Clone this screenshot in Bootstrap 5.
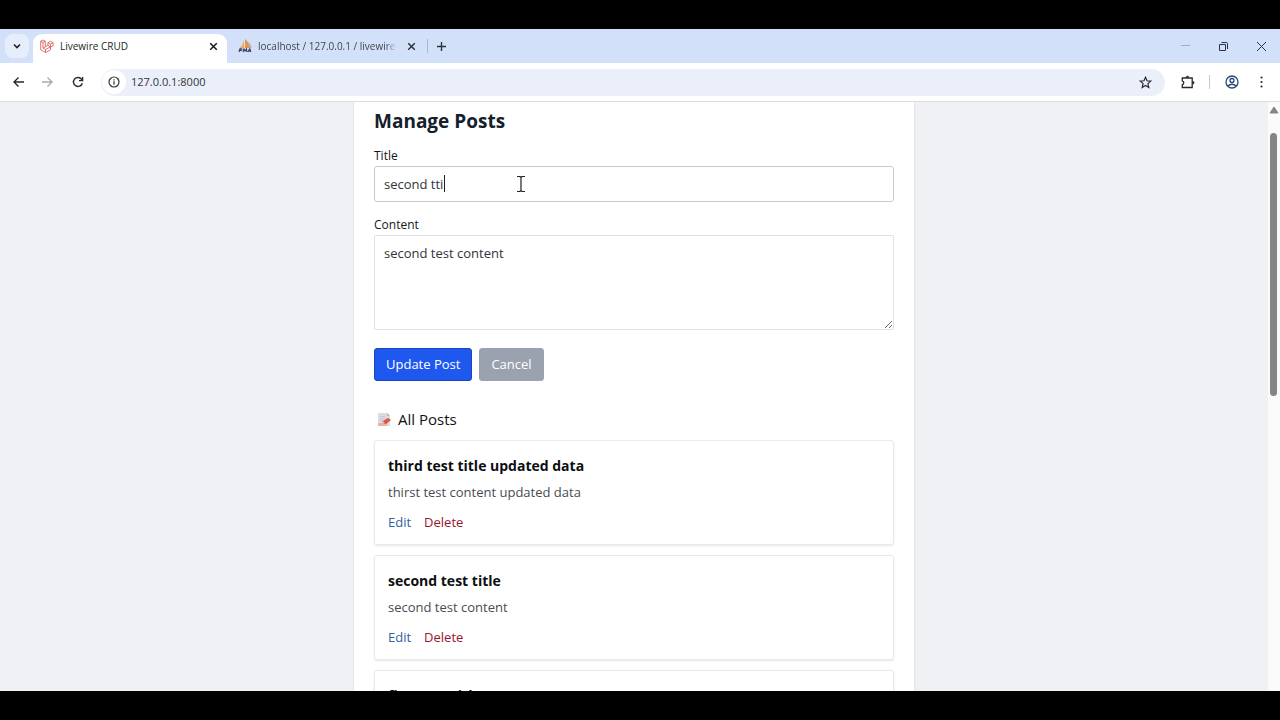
<!DOCTYPE html>
<html lang="en">
<head>
<meta charset="utf-8">
<meta name="viewport" content="width=device-width, initial-scale=1">
<title>Livewire CRUD</title>
<link href="https://cdn.jsdelivr.net/npm/bootstrap@5.3.0/dist/css/bootstrap.min.css" rel="stylesheet">
<style>
body{font-family:"Open Sans","Noto Sans",sans-serif;font-size:13px;line-height:20px;color:#1b1f24;background:#000;padding:29px 0}
svg{display:block;flex:none}
.plain{border:0;background:none;padding:0;color:#22252a}
.tabstrip{background:#d3e0f9;height:34px;font-size:10px;padding:5px 12px 0 5px}
.tab-search{width:24px;height:24px;border-radius:8px;background:#e6eefc}
.strip-group{height:24px}
.window-controls{gap:25px}
.tab-active{width:194px;height:29px;margin-left:4px;padding:0 9px 5px 7px;background:#fff;border-radius:9px 9px 0 0}
.tab-idle{width:200px;height:29px;padding:0 11px 5px 11px;color:#41464e}
.tab-name{overflow:hidden;white-space:nowrap;flex:1 1 0;min-width:0;margin-left:6px}
.tab-fade{margin-right:10px;-webkit-mask-image:linear-gradient(90deg,#000 92%,transparent);mask-image:linear-gradient(90deg,#000 92%,transparent)}
.tab-sep{width:1px;height:14px;background:#a9b7d0}
.toolbar{background:#fff;height:39px;border-bottom:1px solid #dcdddf;padding:0 12px}
.omnibox{height:27px;border-radius:14px;background:#ebeff9;margin-left:13px;padding:0 13px 0 1px}
.omnibox input{font-size:11px;color:#30343a;outline:0;margin-left:5px}
.info-dot{width:24px;height:24px;border-radius:12px;background:#fff}
.tool-sep{margin:0 15px 0 14px;opacity:.75}
.viewport-area{background:#f0f1f4;overflow:hidden}
.panel{width:560px;background:#fff;padding:7px 20px 0;box-shadow:0 0 2px #cfd2d8}
.panel h1{font-size:19px;line-height:24px;font-weight:700;margin:0 0 15px;color:#14202b}
.form-label{font-size:12px;line-height:16px;margin:0 0 2px;font-weight:500;color:#14171a}
.panel .form-control{font-size:13px;line-height:20px;padding:7px 9px;border:1px solid #dfe2e5;border-radius:3px;color:#30343a}
.panel input.form-control{height:36px;border-color:#c3ced2}
.panel textarea.form-control{height:95px;border-radius:2px;resize:both}
.field{margin-bottom:15px}
.actions{margin-top:18px;gap:7px}
.actions .btn{font-size:13px;line-height:19px;padding:6px 11px;border-radius:3px;color:#fff}
.btn-update{background:#1f58ef;border-color:#1746b8}
.btn-cancel{background:#9aa1af;border-color:#9aa1af}
.panel h2{font-size:15px;line-height:24px;font-weight:500;color:#111;margin:26px 0 9px;padding-left:3px;gap:6px}
.post{border:1px solid #e8eaec;border-radius:3px;box-shadow:0 1px 2px #e3e5e8;padding:14px 13px 11px;margin-bottom:10px;height:105px}
.post h3{font-size:14px;line-height:22px;font-weight:700;margin:0 0 5px;color:#0c0f12}
.post p{margin:0 0 10px;color:#474c53}
.post-links{gap:13px}
.edit-link{color:#2f5f9e}.delete-link{color:#98152c}
.caret{position:absolute;left:70px;top:9px;width:1px;height:17px;background:#222}
.pointer{position:absolute;left:142px;top:9px}
.scroller{width:12px;background:#fbfbfc;padding:4px 1px 0 0}
.thumb{width:7px;border-radius:4px;background:#858585;height:45%;margin-top:19px}
</style>
</head>
<body class="vh-100 d-flex flex-column overflow-hidden">
<header>
<div class="tabstrip d-flex align-items-start">
  <button class="plain tab-search d-flex align-items-center justify-content-center" aria-label="Search tabs"><svg width="10" height="10" viewBox="0 0 10 10" fill="none" stroke="#1d2127" stroke-width="1.6"><path d="M2 3.5l3 3 3-3"/></svg></button>
  <div class="tab-active d-flex align-items-center">
    <svg width="14" height="14" viewBox="0 0 14 14" fill="none" stroke="#d9625e" stroke-width=".9" stroke-linejoin="round"><path d="M.7 2.2L3 1l2.3 1.2v5.6l2.6-1.5V3.7l2.6-1.4 2.6 1.4v3L10.500 8.200v2.600L5.500 13.500.7 10.800zM.7 2.200L3 3.500l2.300-1.300M3 3.500v5.700l2.500 1.400 5-2.800M3 9.200l2.300-1.400M7.900 3.700l2.600 1.500 2.600-1.500M10.500 5.200v3M7.900 6.300l2.600 1.700M5.500 10.600v2.900"/></svg>
    <span class="tab-name">Livewire CRUD</span>
    <button class="plain" aria-label="Close tab"><svg width="9" height="9" viewBox="0 0 9 9" stroke="#17191c" stroke-width="1.500"><path d="M1.200 1.200l6.600 6.600M7.800 1.200L1.200 7.800"/></svg></button>
  </div>
  <div class="tab-idle d-flex align-items-center">
    <svg width="14" height="14" viewBox="0 0 14 14"><path d="M6 1v8H1.500Q5 6 6 1z" fill="#e8ab6d"/><path d="M7 0q5 4 5 9H7z" fill="#e8944a"/><path d="M10 3q4 3 3.500 6h-2z" fill="#b9b2ac"/><path d="M1 13l1-3.200h1.500q1 1-.5 1.600H1.800M5 13l1-3 1 2 1.500-2 .3 3M9.800 13l2-3.200 1 3.200M10.500 12h2" fill="none" stroke="#35384f" stroke-width="1.100"/></svg>
    <span class="tab-name tab-fade">localhost / 127.0.0.1 / livewire-crud</span>
    <button class="plain" aria-label="Close tab"><svg width="9" height="9" viewBox="0 0 9 9" stroke="#30343b" stroke-width="1.500"><path d="M1.200 1.200l6.600 6.600M7.800 1.200L1.200 7.800"/></svg></button>
  </div>
  <div class="strip-group d-flex align-items-center gap-2">
    <span class="tab-sep"></span>
    <button class="plain" aria-label="New tab"><svg width="11" height="11" viewBox="0 0 11 11" stroke="#30343b" stroke-width="1.400"><path d="M5.500 1v9M1 5.500h9"/></svg></button>
  </div>
  <div class="strip-group window-controls d-flex align-items-center ms-auto">
    <button class="plain" aria-label="Minimize"><svg width="13" height="11" viewBox="0 0 13 11" stroke="#a4aec2"><path d="M2 4.500h9"/></svg></button>
    <button class="plain" aria-label="Restore"><svg width="13" height="11" viewBox="0 0 13 11" fill="none" stroke="#2c3446"><path d="M2.500 3.500h6v6h-6zM4.500 1.500h5q1 0 1 1v5.500"/></svg></button>
    <button class="plain" aria-label="Close"><svg width="13" height="11" viewBox="0 0 13 11" stroke="#2c3446"><path d="M2 1l9 9M11 1l-9 9"/></svg></button>
  </div>
</div>
<div class="toolbar d-flex align-items-center">
  <button class="plain" aria-label="Back"><svg width="13" height="12" viewBox="0 0 13 12" fill="none" stroke="#262a30" stroke-width="1.400"><path d="M12 6H2M6.500 1.500L2 6l4.500 4.500"/></svg></button>
  <button class="plain ms-3" aria-label="Forward"><svg width="13" height="12" viewBox="0 0 13 12" fill="none" stroke="#a6a9ad" stroke-width="1.400"><path d="M1 6h10M6.500 1.500L11 6l-4.500 4.500"/></svg></button>
  <button class="plain ms-3 pe-1" aria-label="Reload"><svg width="14" height="12" viewBox="0 0 14 12" fill="none" stroke="#262a30" stroke-width="1.400"><path d="M12.300 7.200A4.500 4.500 0 1 1 11.600 3.300L12.500 4.500M12.600 1v3.600H9"/></svg></button>
  <div class="omnibox d-flex align-items-center flex-grow-1 me-3">
    <span class="info-dot d-flex align-items-center justify-content-center"><svg width="12" height="12" viewBox="0 0 12 12" fill="none" stroke="#30343a" stroke-width="1.200"><circle cx="6" cy="6" r="5"/><path d="M6 5.300v3.500M6 3.200v1.200"/></svg></span>
    <input class="plain flex-grow-1" value="127.0.0.1:8000" aria-label="Address">
    <button class="plain" aria-label="Bookmark"><svg width="13" height="13" viewBox="0 0 13 13" fill="none" stroke="#262a30" stroke-width="1.200"><path d="M6.500 1.300l1.500 3.500 3.800.3-2.900 2.500.9 3.800-3.300-2-3.300 2 .9-3.800L1.200 5.100 5 4.800z"/></svg></button>
  </div>
  <button class="plain" aria-label="Extensions"><svg width="14" height="14" viewBox="0 0 14 14" fill="none" stroke="#262a30" stroke-width="1.300"><path d="M1.300 3h9.900v9.500H1.300V9.600a1.900 1.900 0 0 0 0-3.700z"/><path d="M4.900 2.500a1.500 1.500 0 0 1 3 0zM11.700 6.300a1.400 1.400 0 0 1 0 2.900z" fill="#262a30" stroke-width=".5"/></svg></button>
  <span class="tab-sep tool-sep"></span>
  <button class="plain" aria-label="Profile"><svg width="14" height="14" viewBox="0 0 14 14" fill="none" stroke="#274779" stroke-width="1.300"><circle cx="7" cy="7" r="6"/><circle cx="7" cy="5.500" r="2"/><path d="M2.800 11q4.200-3.500 8.400 0"/></svg></button>
  <button class="plain ms-3" aria-label="Menu"><svg width="13" height="14" viewBox="0 0 13 14" fill="#262a30"><circle cx="6.500" cy="2.500" r="1.100"/><circle cx="6.500" cy="7" r="1.100"/><circle cx="6.500" cy="11.500" r="1.100"/></svg></button>
</div>
</header>
<div class="viewport-area d-flex flex-grow-1">
  <main class="flex-grow-1 d-flex justify-content-center">
    <div class="panel">
      <h1>Manage Posts</h1>
      <form>
        <label class="form-label d-block" for="title">Title</label>
        <div class="field position-relative">
          <input id="title" class="form-control" value="second tti">
          <span class="caret"></span>
          <svg class="pointer" width="10" height="18" viewBox="0 0 10 18" fill="none" stroke="#222" stroke-width="1.200"><path d="M1 1.500h3l1 1 1-1h3M5 2.500v13M1 16.500h3l1-1 1 1h3"/></svg>
        </div>
        <label class="form-label d-block" for="content">Content</label>
        <textarea id="content" class="form-control">second test content</textarea>
        <div class="actions d-flex">
          <button type="submit" class="btn btn-update">Update Post</button>
          <button type="button" class="btn btn-cancel">Cancel</button>
        </div>
      </form>
      <h2 class="d-flex align-items-center"><svg width="15" height="15" viewBox="0 0 15 15"><path d="M1 1h9l3 3v10H1z" fill="#dcdae6"/><path d="M10 1v3h3z" fill="#b8b3c6"/><path d="M3 4.500h5M3 6.500h6M3 8.500h4" stroke="#c4c1d2" stroke-width=".8"/><path d="M1 11h9v3H1z" fill="#e8b3a6"/><path d="M5 12l1-3 5-3 3 2-5 4z" fill="#d9563f"/><path d="M5 12l1-3 2 2.500z" fill="#f0c09b"/></svg><span>All Posts</span></h2>
      <article class="post"><h3>third test title updated data</h3><p>thirst test content updated data</p><div class="post-links d-flex"><a href="#" class="edit-link text-decoration-none">Edit</a><a href="#" class="delete-link text-decoration-none">Delete</a></div></article>
      <article class="post"><h3>second test title</h3><p>second test content</p><div class="post-links d-flex"><a href="#" class="edit-link text-decoration-none">Edit</a><a href="#" class="delete-link text-decoration-none">Delete</a></div></article>
      <article class="post"><h3>first test title</h3></article>
    </div>
  </main>
  <div class="scroller d-flex flex-column align-items-center"><svg width="10" height="8" viewBox="0 0 10 8"><path d="M5 1l4 6H1z" fill="#858585" stroke="#858585" stroke-linejoin="round"/></svg><div class="thumb"></div></div>
</div>
<script src="https://cdn.jsdelivr.net/npm/bootstrap@5.3.0/dist/js/bootstrap.bundle.min.js"></script>
</body>
</html>
